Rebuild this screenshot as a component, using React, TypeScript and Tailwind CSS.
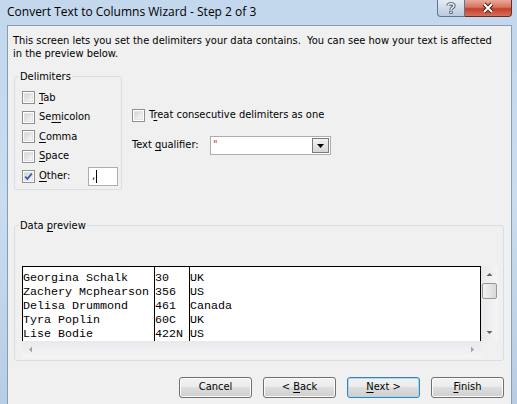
import React from 'react';

const ROWS = [
    ['Georgina Schalk', '30', 'UK'],
    ['Zachery Mcphearson', '356', 'US'],
    ['Delisa Drummond', '461', 'Canada'],
    ['Tyra Poplin', '60C', 'UK'],
    ['Lise Bodie', '422N', 'US'],
];

function CheckBox({ checked }: { checked?: boolean }) {
    return (
        <span className="relative flex w-[13px] h-[13px] shrink-0 border border-[#8e8f8f] bg-white p-[1px]">
            <span className="flex-1 bg-gradient-to-br from-[#d2d4d8] to-[#f8f8f8] border border-[#e2e3e5]" />
            {checked && (
                <svg className="absolute left-0 top-0" width="11" height="11" viewBox="0 0 11 11">
                    <path d="M2.2 5.6 L4.4 7.9 L8.8 2.6" fill="none" stroke="#3d58a8" strokeWidth="1.7" />
                </svg>
            )}
        </span>
    );
}

function Key({ children }: { children: React.ReactNode }) {
    return <span className="underline underline-offset-[2px]">{children}</span>;
}

function Button({ children, isDefault }: { children: React.ReactNode; isDefault?: boolean }) {
    return (
        <div
            className={
                isDefault
                    ? 'w-[73px] h-[21px] flex items-center justify-center rounded-[3px] border border-[#3c7fb1] shadow-[inset_0_0_0_1px_#a8dcf6] bg-[linear-gradient(#f2f2f2_0%,#ebebeb_50%,#dddddd_50%,#cfcfcf_100%)]'
                    : 'w-[73px] h-[21px] flex items-center justify-center rounded-[3px] border border-[#707070] shadow-[inset_0_0_0_1px_#fbfbfb] bg-[linear-gradient(#f2f2f2_0%,#ebebeb_50%,#dddddd_50%,#cfcfcf_100%)]'
            }
        >
            <span className="whitespace-pre">{children}</span>
        </div>
    );
}

function Arrow({ dir, light }: { dir: 'up' | 'down' | 'left' | 'right'; light?: boolean }) {
    const d = {
        up: 'M0.5 4 L3.5 1 L6.5 4 Z',
        down: 'M0.5 1 L3.5 4 L6.5 1 Z',
        left: 'M4 0.5 L1 3.5 L4 6.5 Z',
        right: 'M1 0.5 L4 3.5 L1 6.5 Z',
    }[dir];
    const vertical = dir === 'up' || dir === 'down';
    return (
        <svg width={vertical ? 7 : 5} height={vertical ? 5 : 7} viewBox={vertical ? '0 0 7 5' : '0 0 5 7'}>
            <path d={d} fill={light ? '#a3a3a3' : '#606060'} />
        </svg>
    );
}

export default function App() {
    return (
        <div className="w-[517px] h-[404px] overflow-hidden flex flex-col bg-gradient-to-b from-[#c3d7ed] via-[#c9dcf0] to-[#b7cde6] text-black font-['DejaVu_Sans_Condensed','DejaVu_Sans',sans-serif] text-[11px]">
            {/* Title bar */}
            <div className="h-[25px] shrink-0 flex items-start">
                <div className="flex-1 pl-[7px] pt-[3px] leading-[17px] text-[12px] font-['Open_Sans',sans-serif]">
                    Convert Text to Columns Wizard - Step 2 of 3
                </div>
                <div className="flex mr-[5px]">
                    <div className="w-[28px] h-[17px] flex items-center justify-center rounded-bl-[4px] border border-t-0 border-[#5f7590] bg-gradient-to-b from-[#e4ecf5] via-[#cfdbe8] to-[#b9cadd]">
                        <svg width="10" height="12" viewBox="0 0 10 12">
                            <path d="M2 3.5 C2 1.2 8 1.2 8 3.8 C8 5.6 5 5.6 5 7.8" fill="none" stroke="#3c4a5c" strokeWidth="3.2" />
                            <path d="M2 3.5 C2 1.2 8 1.2 8 3.8 C8 5.6 5 5.6 5 7.8" fill="none" stroke="#ffffff" strokeWidth="1.4" />
                            <rect x="3.4" y="8.8" width="3.2" height="3" fill="#3c4a5c" />
                            <rect x="4.2" y="9.5" width="1.6" height="1.6" fill="#ffffff" />
                        </svg>
                    </div>
                    <div className="w-[47px] h-[17px] flex items-center justify-center rounded-br-[4px] border border-t-0 border-l-0 border-[#6b2b22] bg-[linear-gradient(#e9a99b_0%,#d8725f_45%,#c4402a_55%,#d3705c_100%)]">
                        <svg width="14" height="12" viewBox="0 0 14 12">
                            <path d="M3 2 L11 10 M11 2 L3 10" fill="none" stroke="#46201a" strokeWidth="4" />
                            <path d="M3 2 L11 10 M11 2 L3 10" fill="none" stroke="#ffffff" strokeWidth="2" />
                        </svg>
                    </div>
                </div>
            </div>

            {/* Client area */}
            <div className="flex-1 ml-[7px] mr-[5px] border border-b-0 border-[#8a9cb2] bg-[#f0f0f0] flex flex-col">
                <div className="pl-[5px] pt-[8px] leading-[13px] whitespace-pre">
                    {'This screen lets you set the delimiters your data contains.  You can see how your text is affected'}
                    <br />
                    in the preview below.
                </div>

                <div className="mt-[16px] flex items-start">
                    {/* Delimiters group */}
                    <div className="ml-[6px] w-[108px] h-[114px] border border-[#d5dfe5] rounded-[3px] flex flex-col">
                        <div className="-mt-[7px] ml-[4px] px-[1px] w-fit leading-[14px] bg-[#f0f0f0]">Delimiters</div>
                        <div className="mt-[4px] pl-[7px] flex flex-col">
                            <div className="h-[19.5px] flex items-center gap-[4px]">
                                <CheckBox />
                                <span><Key>T</Key>ab</span>
                            </div>
                            <div className="h-[19.5px] flex items-center gap-[4px]">
                                <CheckBox />
                                <span>Se<Key>m</Key>icolon</span>
                            </div>
                            <div className="h-[19.5px] flex items-center gap-[4px]">
                                <CheckBox />
                                <span><Key>C</Key>omma</span>
                            </div>
                            <div className="h-[19.5px] flex items-center gap-[4px]">
                                <CheckBox />
                                <span><Key>S</Key>pace</span>
                            </div>
                            <div className="h-[21px] flex items-center gap-[4px]">
                                <CheckBox checked />
                                <span className="w-[45px]"><Key>O</Key>ther:</span>
                                <div className="w-[30px] h-[19px] border border-[#abadb3] bg-white flex items-center pl-[3px]">
                                    <span>,</span>
                                    <span className="w-[1px] h-[13px] bg-black ml-[1px]" />
                                </div>
                            </div>
                        </div>
                    </div>

                    {/* Right options */}
                    <div className="ml-[10px] flex flex-col">
                        <div className="mt-[32px] h-[14px] flex items-center gap-[4px]">
                            <CheckBox />
                            <span>T<Key>r</Key>eat consecutive delimiters as one</span>
                        </div>
                        <div className="mt-[14px] flex items-center">
                            <span className="w-[78px]">Text <Key>q</Key>ualifier:</span>
                            <div className="w-[121px] h-[19px] border border-[#abadb3] bg-white flex">
                                <span className="flex-1 pl-[2px] leading-[15px] text-[#a0521d]">"</span>
                                <div className="w-[17px] m-[1px] border border-[#7a7a7a] bg-gradient-to-b from-[#f3f3f3] to-[#d6d6d6] flex items-center justify-center">
                                    <svg width="7" height="4" viewBox="0 0 7 4">
                                        <path d="M0 0 L7 0 L3.5 4 Z" fill="#000" />
                                    </svg>
                                </div>
                            </div>
                        </div>
                    </div>
                </div>

                {/* Data preview group */}
                <div className="mt-[35px] ml-[6px] w-[490px] h-[136px] border border-[#d5dfe5] rounded-[3px] flex flex-col">
                    <div className="-mt-[7px] ml-[4px] px-[1px] w-fit leading-[14px] bg-[#f0f0f0]">
                        Data <Key>p</Key>review
                    </div>
                    <div className="mt-[33px] ml-[7px] w-[476px] h-[92px] flex flex-col">
                        <div className="h-[75px] flex">
                            <div className="w-[459px] border-l border-t border-r border-black bg-white flex font-['Liberation_Mono',monospace] text-[11.67px] leading-[14px]">
                                <div className="w-[132px] border-r border-black pt-[4px]">
                                    {ROWS.map((r) => (
                                        <div key={r[0]} className="whitespace-pre">{r[0]}</div>
                                    ))}
                                </div>
                                <div className="w-[35px] border-r border-black pt-[4px]">
                                    {ROWS.map((r) => (
                                        <div key={r[0]} className="whitespace-pre">{r[1]}</div>
                                    ))}
                                </div>
                                <div className="flex-1 pt-[4px]">
                                    {ROWS.map((r) => (
                                        <div key={r[0]} className="whitespace-pre">{r[2]}</div>
                                    ))}
                                </div>
                            </div>
                            {/* vertical scrollbar */}
                            <div className="w-[17px] flex flex-col bg-gradient-to-r from-[#e9e9ec] to-[#f5f5f6]">
                                <div className="h-[17px] flex items-center justify-center">
                                    <Arrow dir="up" />
                                </div>
                                <div className="mx-[1px] h-[16px] rounded-[2px] border border-[#979797] bg-gradient-to-r from-[#f1f1f1] to-[#d9d9d9]" />
                                <div className="flex-1" />
                                <div className="h-[17px] flex items-center justify-center">
                                    <Arrow dir="down" />
                                </div>
                            </div>
                        </div>
                        {/* horizontal scrollbar */}
                        <div className="h-[17px] flex">
                            <div className="w-[459px] flex items-center justify-between px-[6px] bg-gradient-to-b from-[#e9e9ec] to-[#f5f5f6]">
                                <Arrow dir="left" light />
                                <Arrow dir="right" light />
                            </div>
                            <div className="w-[17px] bg-[#f0f0f0]" />
                        </div>
                    </div>
                </div>

                {/* Buttons */}
                <div className="mt-[16px] pr-[7px] flex justify-end gap-[11px]">
                    <Button>Cancel</Button>
                    <Button>{'< '}<Key>B</Key>ack</Button>
                    <Button isDefault><Key>N</Key>{'ext >'}</Button>
                    <Button><Key>F</Key>inish</Button>
                </div>
            </div>
        </div>
    );
}
